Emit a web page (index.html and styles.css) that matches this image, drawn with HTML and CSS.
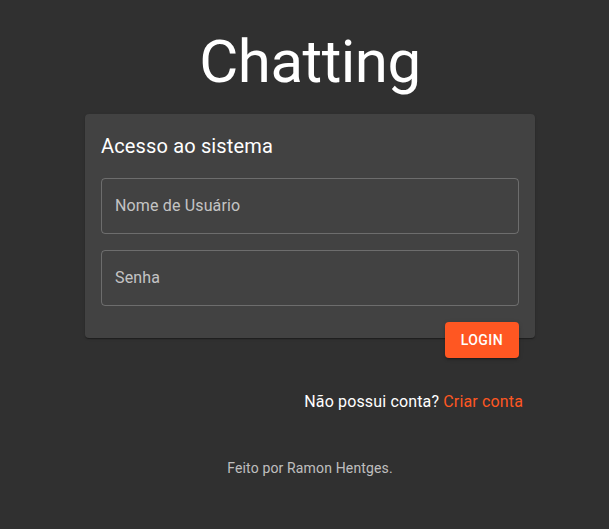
FILE: index.html
```html
<!DOCTYPE html>
<html lang="pt-BR">
<head>
<meta charset="utf-8">
<title>Chatting</title>
<link rel="stylesheet" href="styles.css">
</head>
<body>
<main class="page">
  <h1 class="brand">Chatting</h1>
  <form class="card">
    <h2 class="card-title">Acesso ao sistema</h2>
    <div class="field"><span class="field-label">Nome de Usuário</span></div>
    <div class="field"><span class="field-label">Senha</span></div>
    <div class="actions">
      <button type="button" class="btn">Login</button>
    </div>
  </form>
  <p class="signup">Não possui conta? <a class="link" href="#">Criar conta</a></p>
  <p class="footer">Feito por Ramon Hentges.</p>
</main>
</body>
</html>
```

FILE: styles.css
```css
html, body {
  margin: 0;
  padding: 0;
  background: #303030;
  height: 100%;
}
body {
  font-family: Roboto, "Liberation Sans", sans-serif;
  color: #fff;
}
.page {
  display: flex;
  flex-direction: column;
  align-items: center;
  padding-top: 27px;
  padding-left: 11px;
}
.brand {
  margin: 0;
  font-size: 60px;
  font-weight: 400;
  line-height: 70px;
  letter-spacing: -0.00833em;
  color: #fff;
}
.card {
  margin-top: 17px;
  width: 450px;
  box-sizing: border-box;
  background: #424242;
  border-radius: 4px;
  padding: 16px 16px 0;
  display: flex;
  flex-direction: column;
  gap: 16px;
  box-shadow: 0 2px 1px -1px rgba(0,0,0,0.2), 0 1px 1px 0 rgba(0,0,0,0.14), 0 1px 3px 0 rgba(0,0,0,0.12);
}
.card-title {
  margin: 0;
  font-size: 20px;
  font-weight: 400;
  line-height: 32px;
  letter-spacing: 0.0075em;
}
.field {
  height: 56px;
  box-sizing: border-box;
  border: 1px solid rgba(255,255,255,0.23);
  border-radius: 4px;
  padding: 0 13px 1px;
  display: flex;
  align-items: center;
}
.field-label {
  font-size: 16px;
  line-height: 19px;
  letter-spacing: 0.00938em;
  color: rgba(255,255,255,0.7);
}
.actions {
  display: flex;
  justify-content: flex-end;
  margin-bottom: -20px;
}
.btn {
  font-family: Roboto, "Liberation Sans", sans-serif;
  font-size: 14px;
  font-weight: 500;
  text-transform: uppercase;
  letter-spacing: 0.02857em;
  line-height: 24px;
  color: #fff;
  background: #ff5722;
  border: 0;
  border-radius: 4px;
  padding: 6px 16px;
  min-width: 64px;
  box-shadow: 0 3px 1px -2px rgba(0,0,0,0.2), 0 2px 2px 0 rgba(0,0,0,0.14), 0 1px 5px 0 rgba(0,0,0,0.12);
}
.signup {
  align-self: stretch;
  width: 450px;
  margin: 52px auto 0;
  box-sizing: border-box;
  padding-right: 12px;
  text-align: right;
  font-size: 16px;
  line-height: 24px;
  letter-spacing: 0.00938em;
}
.link {
  color: #ff5722;
  text-decoration: none;
}
.footer {
  margin: 44px 0 0;
  font-size: 14px;
  line-height: 20px;
  letter-spacing: 0.01071em;
  color: rgba(255,255,255,0.7);
}
```
